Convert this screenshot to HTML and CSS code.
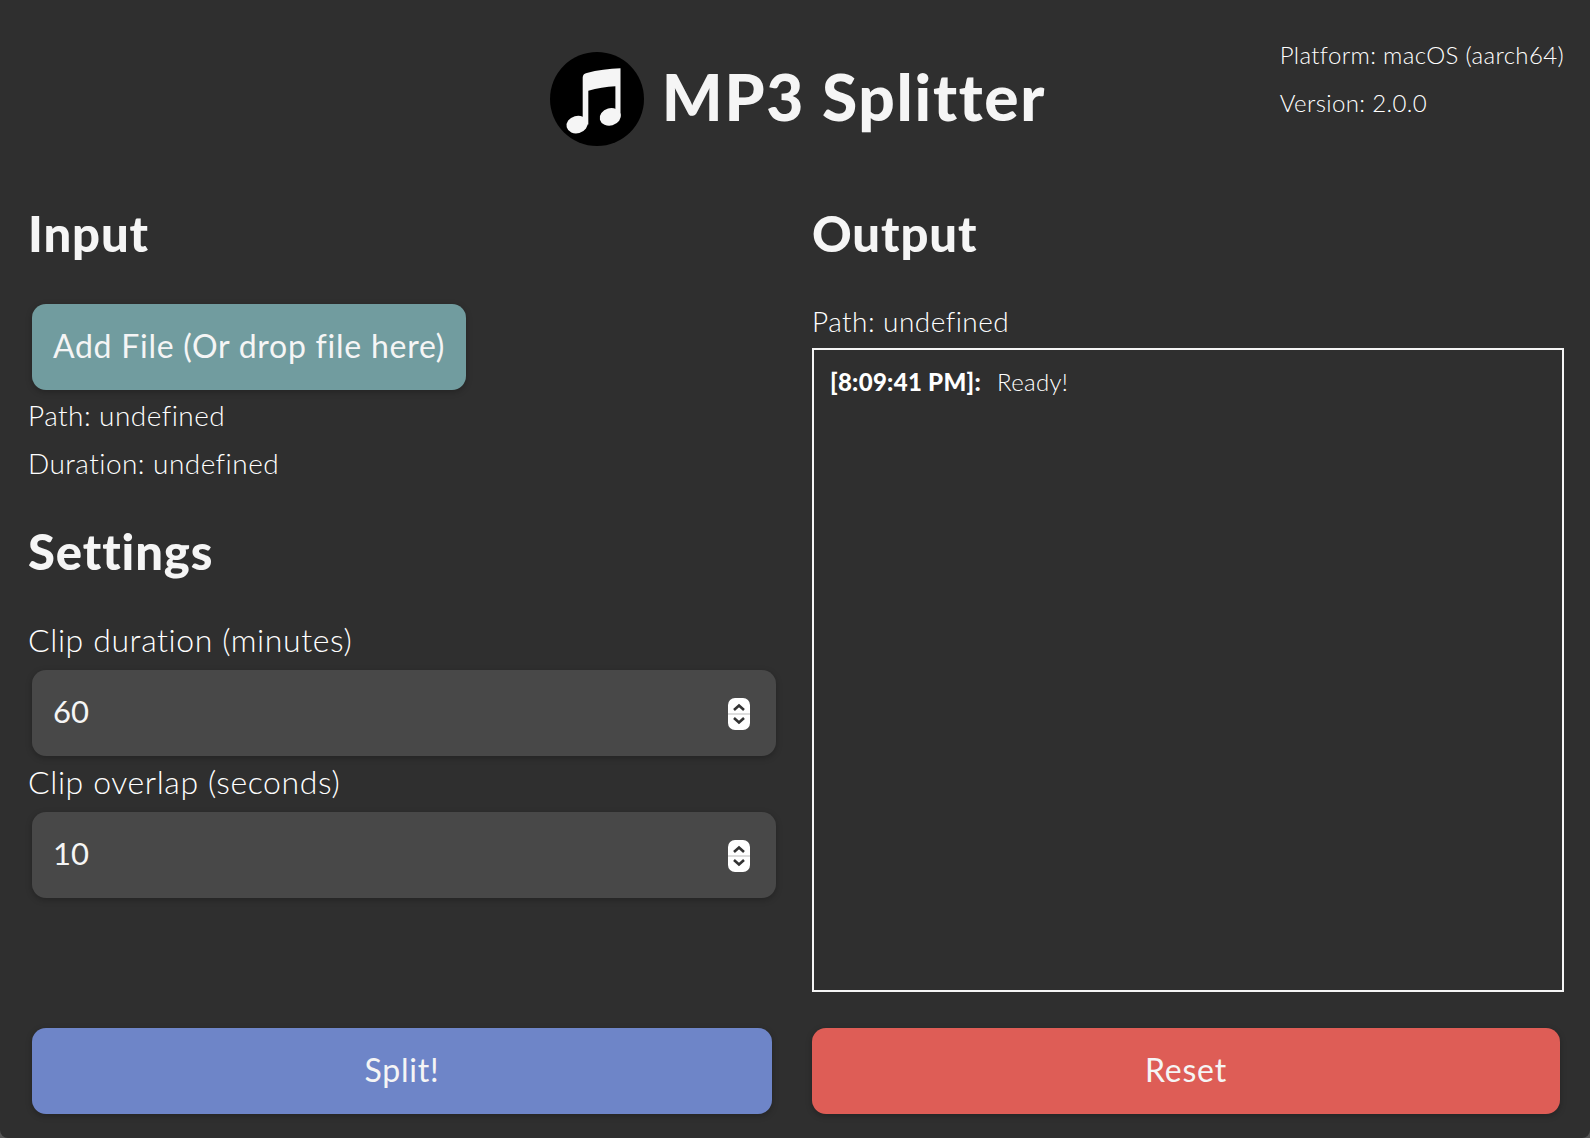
FILE: index.html
```html
<!DOCTYPE html>
<html lang="en">
  <head>
    <meta charset="UTF-8" />
    <meta name="viewport" content="width=device-width, initial-scale=1.0" />
    <title>MP3 Splitter</title>
    <link rel="stylesheet" href="styles.css">
  </head>
  <body>
<div class="app">
  <header class="header">
    <div></div>
    <div class="brand">
      <svg class="logo" viewBox="0 0 92 92" aria-hidden="true">
        <circle cx="46" cy="46" r="46" fill="#000" />
        <path fill="#f5f5f5" d="M32 25C32 22 34 21 36 20.5C46 18 58 16.5 69 16V63H64V33.5C55 34 46 35.5 37.5 38V71H32Z" />
        <ellipse cx="26.5" cy="71" rx="10.5" ry="8.5" transform="rotate(-15 26.5 71)" fill="#f5f5f5" />
        <ellipse cx="59" cy="63.5" rx="10.5" ry="8.5" transform="rotate(-15 59 63.5)" fill="#f5f5f5" />
      </svg>
      <h1>MP3 Splitter</h1>
    </div>
    <div class="about">
      <p>Platform: macOS (aarch64)</p>
      <p>Version: 2.0.0</p>
    </div>
  </header>

  <main class="columns">
    <section class="left">
      <h2>Input</h2>
      <button type="button" class="btn btn-file">Add File (Or drop file here)</button>
      <p class="info first">Path: undefined</p>
      <p class="info">Duration: undefined</p>

      <h2 class="settings">Settings</h2>
      <label class="label" for="duration">Clip duration (minutes)</label>
      <div class="number">
        <input id="duration" type="text" value="60" />
        <span class="spinner">
          <svg viewBox="0 0 22 32" aria-hidden="true">
            <path d="M6 12L11 7.5L16 12M6 20L11 24.5L16 20" />
            <line class="divider" x1="0" y1="16" x2="22" y2="16" />
          </svg>
        </span>
      </div>
      <label class="label" for="overlap">Clip overlap (seconds)</label>
      <div class="number">
        <input id="overlap" type="text" value="10" />
        <span class="spinner">
          <svg viewBox="0 0 22 32" aria-hidden="true">
            <path d="M6 12L11 7.5L16 12M6 20L11 24.5L16 20" />
            <line class="divider" x1="0" y1="16" x2="22" y2="16" />
          </svg>
        </span>
      </div>
    </section>

    <section class="right">
      <h2>Output</h2>
      <p class="info output-path">Path: undefined</p>
      <div class="log">
        <p><strong>[8:09:41 PM]:</strong><span>Ready!</span></p>
      </div>
    </section>
  </main>

  <footer class="actions">
    <button type="button" class="btn btn-split">Split!</button>
    <button type="button" class="btn btn-reset">Reset</button>
  </footer>
</div>
  </body>
</html>
```

FILE: styles.css
```css
* {
  margin: 0;
  padding: 0;
  box-sizing: border-box;
  font-family: Lato, "Open Sans", sans-serif;
  font-variant-ligatures: none;
}

html,
body {
  height: 100%;
  overflow: hidden;
}

body {
  background-color: #555;
}

.app {
  height: 1138px;
  background-color: #2f2f2f;
  color: #fff;
  border-radius: 0 0 8px 8px;
  padding: 0 26px 24px 28px;
  display: flex;
  flex-direction: column;
}

.header {
  display: grid;
  grid-template-columns: 1fr auto 1fr;
  height: 200px;
  padding: 52px 0 0 4px;
}

.brand {
  display: flex;
  align-items: flex-start;
  gap: 18px;
}

.logo {
  width: 94px;
  height: 94px;
}

h1 {
  font-size: 64px;
  font-weight: 900;
  line-height: 90px;
  letter-spacing: 1.7px;
  color: #f5f5f5;
}

.about {
  justify-self: end;
  margin-top: -21px;
  font-size: 24px;
  font-weight: 300;
  letter-spacing: 0.35px;
}

.about p {
  line-height: 48px;
}

.columns {
  display: grid;
  grid-template-columns: 756px 752px;
  column-gap: 28px;
  flex: 1;
}

h2 {
  font-size: 49px;
  font-weight: 900;
  line-height: 66px;
  letter-spacing: 0.9px;
  color: #f5f5f5;
}

.btn {
  height: 86px;
  border: none;
  border-radius: 14px;
  padding-bottom: 4px;
  color: #f5f5f5;
  font-size: 32px;
  font-weight: 400;
  letter-spacing: 0.75px;
  cursor: pointer;
  box-shadow: 0 2px 6px rgba(0, 0, 0, 0.25);
}

.btn-file {
  display: block;
  width: 434px;
  margin: 38px 0 0 4px;
  background-color: #719c9f;
}

.info {
  font-size: 28px;
  font-weight: 300;
  line-height: 48px;
  letter-spacing: 0.45px;
}

.info.first {
  margin-top: 1px;
}

.settings {
  margin-top: 31px;
}

.label {
  display: block;
  font-size: 32px;
  font-weight: 300;
  line-height: 52px;
  padding-bottom: 4px;
  letter-spacing: 0.6px;
}

.settings + .label {
  margin-top: 30px;
}

.number {
  display: flex;
  align-items: center;
  height: 86px;
  margin: 0 8px 0 4px;
  padding: 0 26px 0 21px;
  background-color: #484848;
  border-radius: 14px;
  box-shadow: 0 2px 6px rgba(0, 0, 0, 0.25);
}

.number input {
  flex: 1;
  min-width: 0;
  background: none;
  border: none;
  outline: none;
  color: #f5f5f5;
  font-size: 31px;
  padding-bottom: 4px;
}

.spinner {
  width: 22px;
  height: 32px;
  margin-top: 2px;
  background-color: #fff;
  border-radius: 7px;
  overflow: hidden;
}

.spinner svg {
  display: block;
  width: 22px;
  height: 32px;
}

.spinner path {
  fill: none;
  stroke: #333;
  stroke-width: 2.6;
}

.spinner .divider {
  stroke: #ddd;
  stroke-width: 2;
}

.output-path {
  margin-top: 28px;
  line-height: 54px;
}

.log {
  height: 644px;
  border: 2px solid #f5f5f5;
  padding: 17px 16px;
  font-size: 24px;
  font-weight: 300;
  letter-spacing: 0.3px;
}

.log strong {
  font-weight: 900;
}

.log span {
  margin-left: 16px;
}

.actions {
  display: grid;
  grid-template-columns: 740px 748px;
  column-gap: 40px;
  padding-left: 4px;
}

.btn-split {
  background-color: #6e85c8;
}

.btn-reset {
  background-color: #de5d56;
}
```
